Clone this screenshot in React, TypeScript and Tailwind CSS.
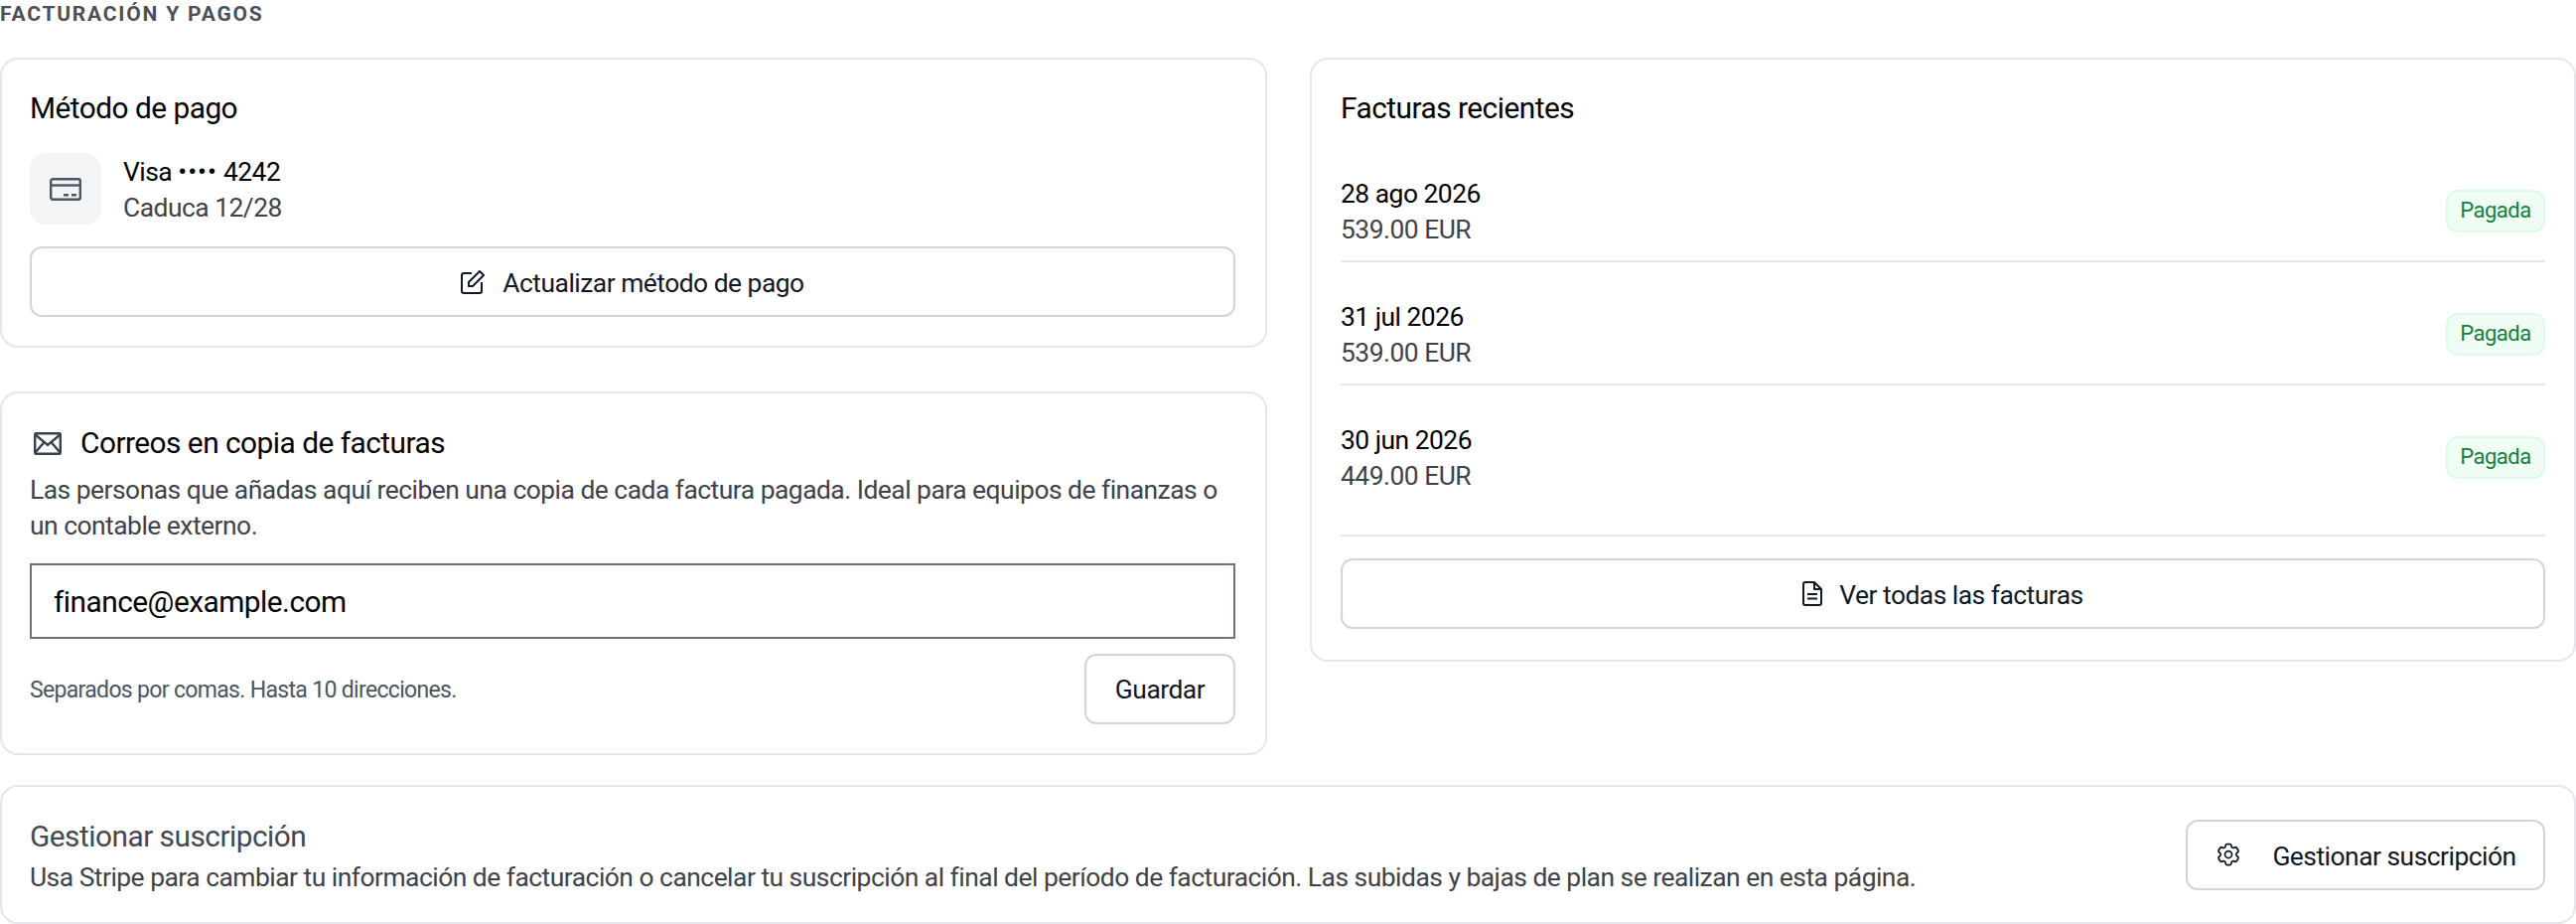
import { HiOutlineCog6Tooth } from 'react-icons/hi2'

const invoices = [
  { date: '28 ago 2026', amount: '539.00 EUR' },
  { date: '31 jul 2026', amount: '539.00 EUR' },
  { date: '30 jun 2026', amount: '449.00 EUR' },
]

function CardIcon() {
  return (
    <svg viewBox="0 0 32 23" fill="none" stroke="#4b5563" strokeWidth="2.4" className="h-[23px] w-[32px]">
      <rect x="1.2" y="1.2" width="29.6" height="20.6" rx="2" />
      <path d="M1 7.5h30" />
      <path d="M14 17.2h5M22 17.2h5" />
    </svg>
  )
}

function EditIcon() {
  return (
    <svg viewBox="0 0 24 24" fill="none" stroke="#111827" strokeWidth="2" strokeLinejoin="round" className="h-[24px] w-[24px]">
      <path d="M11 3H3a2 2 0 0 0-2 2v16a2 2 0 0 0 2 2h16a2 2 0 0 0 2-2v-9" />
      <path d="M19 1l4 4-11 11H8v-4z" />
    </svg>
  )
}

function MailIcon() {
  return (
    <svg viewBox="0 0 28 23" fill="none" stroke="#374151" strokeWidth="2.4" className="h-[23px] w-[28px]">
      <rect x="1.2" y="1.2" width="25.6" height="20.6" rx="1" />
      <path d="M1 2l13 11L27 2M1 21l9.5-11M27 21l-9.5-11" />
    </svg>
  )
}

function DocIcon() {
  return (
    <svg viewBox="0 0 20 25" fill="none" stroke="#111827" strokeWidth="2" strokeLinejoin="round" className="h-[25px] w-[20px]">
      <path d="M3 1h9l7 7v14a2 2 0 0 1-2 2H3a2 2 0 0 1-2-2V3a2 2 0 0 1 2-2z" />
      <path d="M12 1v7h7M5 13h10M5 17.5h10" />
    </svg>
  )
}

export default function App() {
  return (
    <div className="flex h-[930px] w-[2594px] flex-col bg-white font-['Roboto',sans-serif] text-[26.4px] leading-[36px] tracking-[-0.5px] text-[#3f424a]">
      <h2 className="h-[58px] pt-[1px] text-[21px] leading-[26px] font-bold tracking-[1.8px] text-[#4b5058] uppercase">
        Facturación y pagos
      </h2>

      <div className="grid grid-cols-[1276px_1275px] gap-x-[43px]">
        <div className="flex flex-col gap-[44px]">
          <section className="rounded-[18px] border-2 border-[#e5e7eb] pt-[29px] pr-[30px] pb-[29px] pl-[28px]">
            <h3 className="text-[29.8px] leading-[40px] text-black">Método de pago</h3>
            <div className="mt-[25px] flex items-center gap-[22px]">
              <div className="flex h-[72px] w-[72px] items-center justify-center rounded-[16px] bg-[#f3f4f6]">
                <CardIcon />
              </div>
              <div className="translate-y-[1px]">
                <div className="text-black">
                  Visa <span className="tracking-[1px]">••••</span> 4242
                </div>
                <div>Caduca 12/28</div>
              </div>
            </div>
            <button className="mt-[22px] flex h-[71px] w-full items-center justify-center gap-[18px] rounded-[12px] border-2 border-[#d1d5db] text-[#111827]">
              <EditIcon />
              <span className="mt-[3px]">Actualizar método de pago</span>
            </button>
          </section>

          <section className="rounded-[18px] border-2 border-[#e5e7eb] pt-[30px] pr-[30px] pb-[29px] pl-[28px]">
            <div className="flex items-center gap-[19px] pl-[4px] text-[29.8px] leading-[40px] text-black">
              <MailIcon />
              Correos en copia de facturas
            </div>
            <p className="mt-[9px]">
              Las personas que añadas aquí reciben una copia de cada factura pagada. Ideal para equipos de finanzas o un contable externo.
            </p>
            <input
              readOnly
              value="finance@example.com"
              className="mt-[20px] block h-[76px] w-full border-2 border-[#6b7280] px-[22px] text-[29.8px] text-black outline-none"
            />
            <div className="mt-[15px] flex items-center justify-between">
              <span className="pt-[3px] text-[23px] tracking-[-0.67px] text-[#4b5563]">Separados por comas. Hasta 10 direcciones.</span>
              <button className="h-[71px] w-[152px] rounded-[12px] border-2 border-[#d1d5db] text-[#111827]">Guardar</button>
            </div>
          </section>
        </div>

        <section className="self-start rounded-[18px] border-2 border-[#e5e7eb] px-[29px] pt-[29px] pb-[31px]">
          <h3 className="text-[29.8px] leading-[40px] text-black">Facturas recientes</h3>
          <div className="mt-[11px]">
            {invoices.map((invoice, i) => (
              <div
                key={invoice.date}
                className={`flex items-center justify-between pt-[37px] pb-[13px] ${i < 2 ? 'border-b-2 border-[#e5e7eb]' : ''}`}
              >
                <div>
                  <div className="text-black">{invoice.date}</div>
                  <div>{invoice.amount}</div>
                </div>
                <span className="-mt-[2px] flex h-[43px] w-[100px] items-center justify-center rounded-[12px] border-2 border-[#dcfce7] bg-[#f0fdf4] text-[22px] text-[#15803d]">
                  Pagada
                </span>
              </div>
            ))}
          </div>
          <div className="mt-[28px] border-t-2 border-[#e5e7eb] pt-[22px]">
            <button className="flex h-[71px] w-full items-center justify-center gap-[17px] rounded-[12px] border-2 border-[#d1d5db] text-[#111827]">
              <DocIcon />
              <span className="mt-[3px]">Ver todas las facturas</span>
            </button>
          </div>
        </section>
      </div>

      <section className="mt-[30px] flex h-[140px] items-center justify-between rounded-[18px] border-2 border-[#e5e7eb] pr-[29px] pl-[28px]">
        <div className="pt-[3px]">
          <div className="text-[29.8px] leading-[40px] text-[#45484f]">Gestionar suscripción</div>
          <p className="mt-[3px]">
            Usa Stripe para cambiar tu información de facturación o cancelar tu suscripción al final del período de facturación. Las subidas y bajas de plan se realizan en esta página.
          </p>
        </div>
        <button className="flex h-[71px] w-[362px] items-center justify-center gap-[30px] rounded-[12px] border-2 border-[#d1d5db] text-[#111827]">
          <HiOutlineCog6Tooth className="h-[28px] w-[28px]" />
          <span className="mt-[3px]">Gestionar suscripción</span>
        </button>
      </section>
    </div>
  )
}
